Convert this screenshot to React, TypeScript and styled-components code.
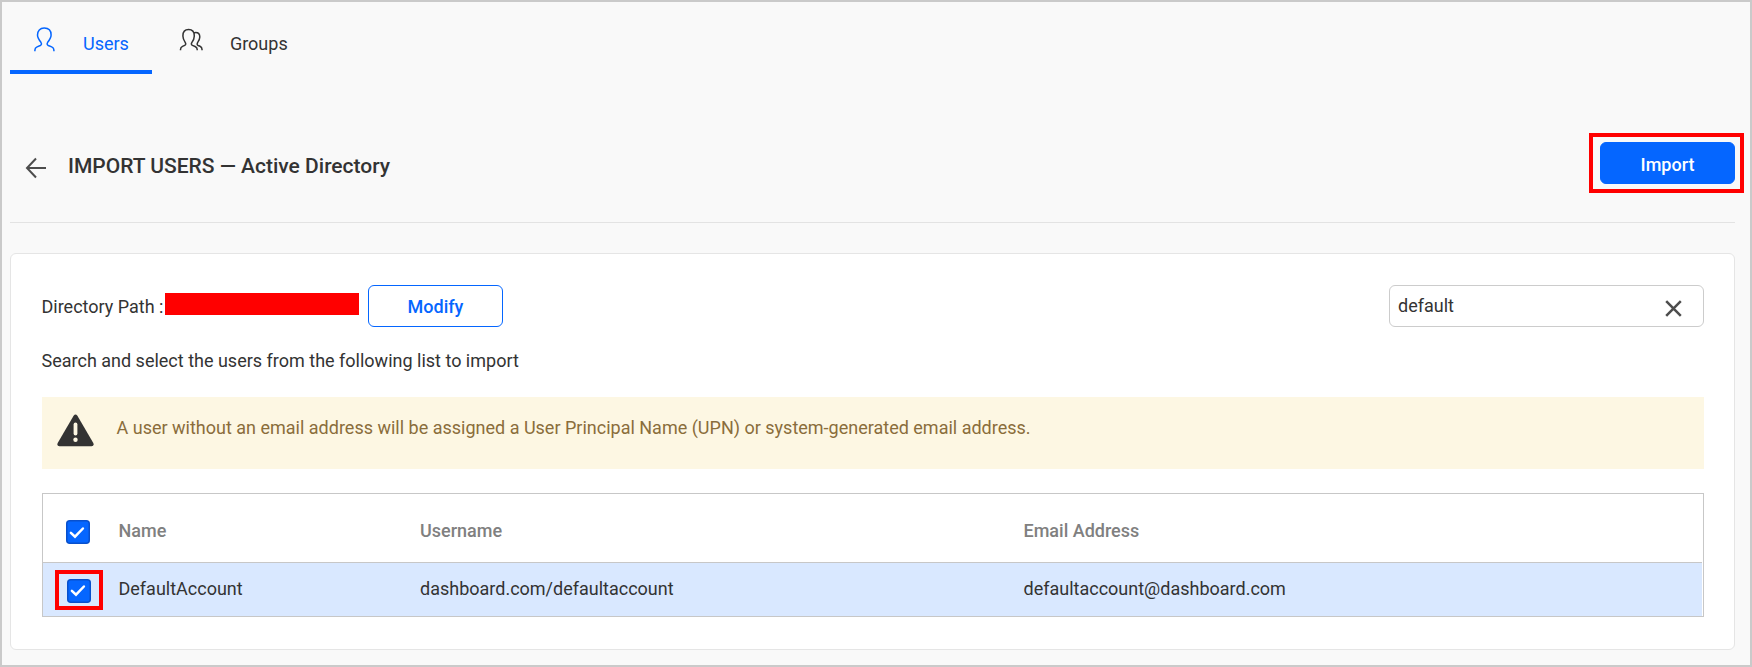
import React from 'react';
import styled, { createGlobalStyle, css } from 'styled-components';

const GlobalStyle = createGlobalStyle`
  *, *::before, *::after { box-sizing: border-box; }
  body {
    margin: 0;
    font-family: Roboto, 'Liberation Sans', sans-serif;
    font-size: 18px;
    line-height: 24px;
    color: #333;
  }
  button, input { font: inherit; }
`;

const Page = styled.div`
  height: 667px;
  padding: 0 15px 0 8px;
  border: 2px solid #cacaca;
  background: #f9f9f9;
  overflow: hidden;
`;

const TabBar = styled.nav`
  display: flex;
  height: 72px;
`;

const Tab = styled.a<{ $active?: boolean; $gap: number }>`
  display: flex;
  align-items: flex-start;
  gap: ${({ $gap }) => $gap}px;
  padding: 24px 23px 0 24px;
  border-bottom: 4px solid ${({ $active }) => ($active ? '#0566ff' : 'transparent')};
  color: ${({ $active }) => ($active ? '#0566ff' : '#333')};

  & + & {
    padding-left: 27px;
  }
`;

const TabLabel = styled.span`
  padding-top: 6px;
`;

const PageHeader = styled.header`
  display: flex;
  align-items: flex-start;
  height: 149px;
  padding: 68px 0 0 14px;
  border-bottom: 1px solid #e3e3e3;
`;

const BackIcon = styled.svg`
  flex: none;
  margin: 15px 20px 0 0;
`;

const Title = styled.h1`
  flex: 1;
  margin: 12px 0 0;
  font-size: 21px;
  font-weight: 500;
  line-height: 24px;
`;

const Highlighted = styled.div<{ $inset: string }>`
  position: relative;
  flex: none;

  &::after {
    content: '';
    position: absolute;
    inset: ${({ $inset }) => $inset};
    border: 4px solid #f00;
    pointer-events: none;
  }
`;

const primary = css`
  padding-top: 4px;
  border: 1px solid #0566ff;
  background: #0566ff;
  color: #fff;
`;

const outline = css`
  padding-top: 2px;
  border: 1px solid #0566ff;
  background: #fff;
  color: #0566ff;
`;

const Button = styled.button<{ $primary?: boolean }>`
  display: block;
  width: 135px;
  height: 42px;
  padding: 0;
  border-radius: 6px;
  font-weight: 500;
  ${({ $primary }) => ($primary ? primary : outline)}
`;

const Card = styled.section`
  height: 397px;
  margin-top: 30px;
  padding: 31px 30px 0 31px;
  border: 1px solid #e5e5e5;
  border-radius: 6px;
  background: #fff;
`;

const Toolbar = styled.div`
  display: flex;
  align-items: center;
  height: 42px;
`;

const PathLabel = styled.span`
  width: 123px;
  padding-top: 2px;
  margin-left: -0.5px;
  margin-right: 0.5px;
  white-space: nowrap;
`;

const Redaction = styled.span`
  width: 194px;
  height: 22px;
  margin: 0 9px 4px 0;
  background: #f00;
`;

const SearchBox = styled.div`
  display: flex;
  align-items: center;
  width: 315px;
  height: 42px;
  margin-left: auto;
  padding: 0 21px 0 8px;
  border: 1px solid #ccc;
  border-radius: 6px;
  background: #fff;
`;

const SearchInput = styled.input`
  flex: 1;
  min-width: 0;
  padding: 0;
  border: 0;
  outline: 0;
  background: none;
  color: #333;
`;

const ClearIcon = styled.svg`
  flex: none;
  margin-top: 5px;
`;

const Hint = styled.p`
  margin: 22px 0 0 -0.5px;
`;

const Warning = styled.div`
  display: flex;
  align-items: flex-start;
  gap: 22.5px;
  height: 72px;
  margin-top: 24px;
  padding: 17px 15px 0;
  background: #fdf7e3;
  color: #8a6d3b;
`;

const WarningText = styled.span`
  padding-top: 2px;
`;

const Table = styled.div`
  height: 124px;
  margin-top: 24px;
  padding-right: 1px;
  border: 1px solid #c7c7c7;
`;

const Row = styled.div<{ $header?: boolean }>`
  display: grid;
  grid-template-columns: 75.5px 301.5px 603.5px 1fr;
  align-items: center;
  height: ${({ $header }) => ($header ? 69 : 53)}px;
  ${({ $header }) =>
    $header
      ? css`
          padding-top: 6px;
          border-bottom: 1px solid #c7c7c7;
          color: #808080;
          font-weight: 500;
        `
      : css`
          background: #d9e8ff;
        `}
`;

const Cell = styled.span`
  padding-bottom: 2px;
`;

const CheckCell = styled.div<{ $shift?: boolean }>`
  padding: ${({ $shift }) => ($shift ? '2px 0 0 24px' : '2px 0 0 23px')};
  display: flex;
`;

const CheckFrame = styled.svg`
  display: block;
`;

function UserIcon() {
  return (
    <svg width="27" height="28" viewBox="0 0 27 28" fill="none" stroke="currentColor" strokeWidth="1.5">
      <path d="M.9 25.200v-1.100c0-1.500.7-2.500 2.200-3.200l3.200-1.400c1.400-.7 1.500-1.800.6-3.200C5 13.900 3.500 12 3.500 9 3.500 4.700 6 2.100 10.200 2.100S17.100 4.700 17.100 9c0 3-1.500 4.900-3.400 7.300-.9 1.400-.8 2.500.6 3.200l3.400 1.400c1.500.7 2.200 1.700 2.200 3.200v1.100" />
    </svg>
  );
}

function GroupIcon() {
  return (
    <svg width="27" height="28" viewBox="0 0 27 28" fill="none" stroke="currentColor" strokeWidth="1.5">
      <path d="M1.500 24.200v-.8c0-1.400.7-2.400 2-3l2.200-1c1.200-.6 1.300-1.600.6-2.800C4.900 14.500 3.900 12.600 3.900 9.900c0-4 2-6.300 5.700-6.300s5.700 2.300 5.700 6.300c0 2.700-1 4.600-2.500 6.700-.7 1.200-.6 2.200.6 2.800l2.700 1.100c1.500.7 2.100 1.500 2.100 2.900v.8" />
      <path d="M14.800 7.100c.5-.3 1.100-.5 1.900-.5 2.700 0 4.100 1.600 4.100 4.400 0 2.200-.8 3.700-2.200 5.600-.7 1.200-.6 2.300.6 2.900l1.800.8c1.300.6 2 1.600 2 3v.9" />
    </svg>
  );
}

function Checkbox({ markY = 0 }: { markY?: number }) {
  return (
    <CheckFrame width="24" height="24" viewBox="0 0 24 24" fill="none">
      <rect x=".75" y=".75" width="22.500" height="22.500" rx="3" fill="#0566ff" stroke="#0850cd" strokeWidth="1.500" />
      <path
        d={`M4.900 ${12.8 + markY}l4.100 3.900 7.900-8.200`}
        stroke="#fff"
        strokeWidth="2.500"
        strokeLinecap="round"
        strokeLinejoin="miter"
      />
    </CheckFrame>
  );
}

export default function App() {
  return (
    <>
      <GlobalStyle />
      <Page>
        <TabBar>
          <Tab $active $gap={22}>
            <UserIcon />
            <TabLabel>Users</TabLabel>
          </Tab>
          <Tab $gap={24}>
            <GroupIcon />
            <TabLabel>Groups</TabLabel>
          </Tab>
        </TabBar>

        <PageHeader>
          <BackIcon width="24" height="22" viewBox="0 0 24 22" fill="none" stroke="#4d4d4d" strokeWidth="2">
            <path d="M12 1.500L3 11l9 9.500M3 11h19" />
          </BackIcon>
          <Title>IMPORT USERS — Active Directory</Title>
          <Highlighted $inset="-9px -9px -9px -11px">
            <Button $primary>Import</Button>
          </Highlighted>
        </PageHeader>

        <Card>
          <Toolbar>
            <PathLabel>Directory Path :</PathLabel>
            <Redaction />
            <Button>Modify</Button>
            <SearchBox>
              <SearchInput defaultValue="default" aria-label="Search users" />
              <ClearIcon width="17" height="17" viewBox="0 0 17 17" fill="none" stroke="#4d4d4d" strokeWidth="2.500">
                <path d="M1.200 1.200l14.600 14.600M15.800 1.200L1.200 15.800" />
              </ClearIcon>
            </SearchBox>
          </Toolbar>

          <Hint>Search and select the users from the following list to import</Hint>

          <Warning>
            <svg width="37" height="33" viewBox="0 0 37 33">
              <path d="M16.600 1.700Q18.500-.6 20.400 1.700L36.300 28.900Q37.400 32 34.600 32.300H2.400Q-.4 32 .7 28.900Z" fill="#333" />
              <path d="M18.500 10.500v9" stroke="#fdf7e3" strokeWidth="3.800" strokeLinecap="round" />
              <circle cx="18.500" cy="25.700" r="2.200" fill="#fdf7e3" />
            </svg>
            <WarningText>
              A user without an email address will be assigned a User Principal Name (UPN) or system-generated email address.
            </WarningText>
          </Warning>

          <Table>
            <Row $header>
              <CheckCell>
                <Checkbox />
              </CheckCell>
              <span>Name</span>
              <span>Username</span>
              <span>Email Address</span>
            </Row>
            <Row>
              <CheckCell $shift>
                <Highlighted $inset="-9px -12px -7px -12px">
                  <Checkbox markY={-1} />
                </Highlighted>
              </CheckCell>
              <Cell>DefaultAccount</Cell>
              <Cell>dashboard.com/defaultaccount</Cell>
              <Cell>defaultaccount@dashboard.com</Cell>
            </Row>
          </Table>
        </Card>
      </Page>
    </>
  );
}
